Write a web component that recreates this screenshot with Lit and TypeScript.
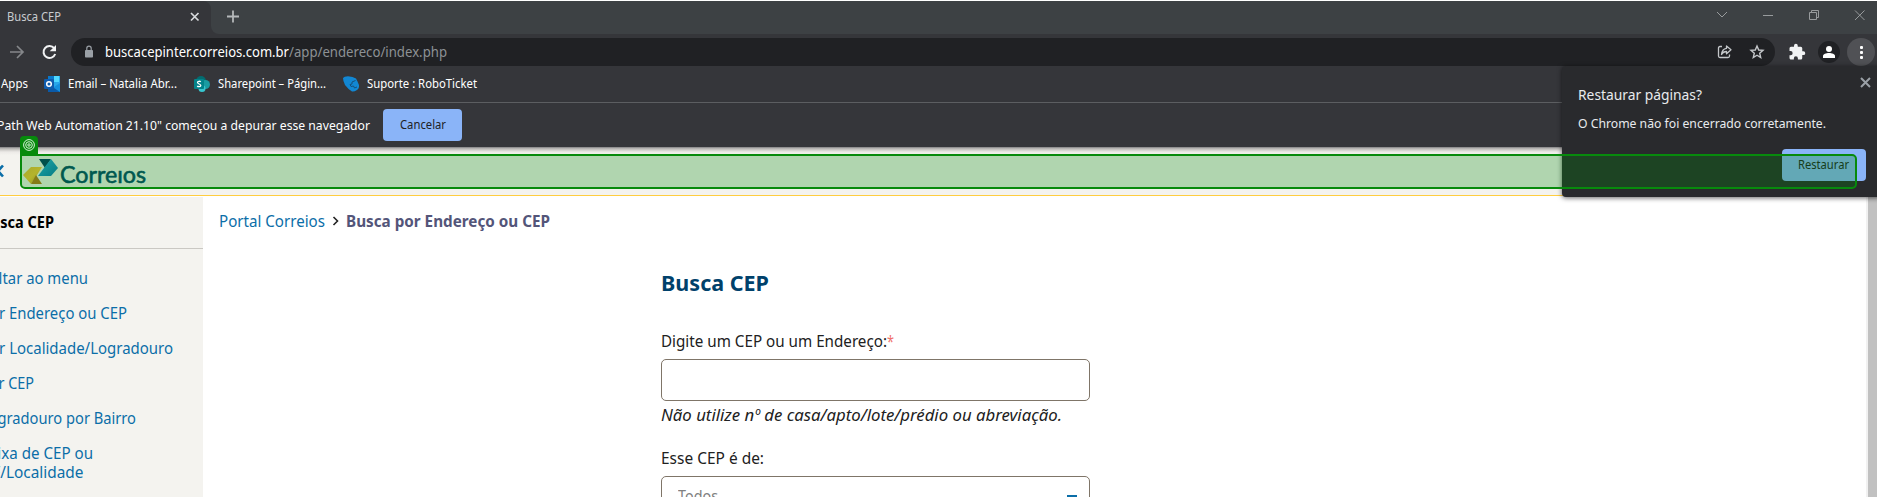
import { LitElement, html, css } from "lit";
import { customElement, property } from "lit/decorators.js";

/* A run of text that occupies an exact width, condensing its glyphs to fit. */
@customElement("fit-text")
class FitText extends LitElement {
  @property({ type: Number }) w = 0;
  static styles = css`
    :host { display: block; white-space: nowrap; flex: none; }
    .run { display: inline-block; transform-origin: 0 50%; white-space: nowrap; }
  `;
  firstUpdated() {
    const run = this.renderRoot.querySelector(".run") as HTMLElement;
    const fit = () => {
      run.style.transform = "none";
      const n = run.getBoundingClientRect().width;
      if (n) run.style.transform = `scaleX(${this.w / n})`;
    };
    fit();
    document.fonts?.ready.then(fit);
  }
  render() {
    return html`<div style="width:${this.w}px"><span class="run"><slot></slot></span></div>`;
  }
}

const menu = [
  { lines: [["Voltar ao menu", 107]] },
  { lines: [["Por Endereço ou CEP", 146]] },
  { lines: [["Por Localidade/Logradouro", 192]] },
  { lines: [["Por CEP", 53]] },
  { lines: [["Logradouro por Bairro", 155]] },
  { lines: [["Faixa de CEP ou", 112], ["UF/Localidade", 102.5]] },
];

@customElement("app-root")
class AppRoot extends LitElement {
  static styles = css`
    :host { display: block; width: 1877px; height: 497px; position: relative; overflow: hidden; background: #fff;
      font-family: "Noto Sans", "Open Sans", sans-serif; }
    * { box-sizing: border-box; }
    svg { display: block; flex: none; }
    .wrap { display: flex; flex-direction: column; height: 497px; }
    .tabs { margin-top: 1px; height: 33px; flex: none; background: #3d4144; display: flex; }
    .tab { width: 211px; background: #35363a; border-radius: 0 8px 0 0; display: flex; align-items: center; padding: 0 9px 2px 7px;
      justify-content: space-between; color: #c9ccd0; font-size: 12px; }
    .tab fit-text { line-height: 15px; margin-bottom: 1px; }
    .rest { flex: 1; background: #35363a; }
    .rest-in { height: 33px; background: #3d4144; border-radius: 0 0 0 8px; display: flex; align-items: center; padding: 0 4px 5px 14px; justify-content: space-between; }
    .bar { background: #35363a; display: flex; align-items: center; padding: 4px 0 0 9px; height: 32px; flex: none; }
    .bar > .reload { margin-left: 17px; }
    .omni { margin-left: 14px; width: 1704px; height: 28px; border-radius: 14px; background: #202124; display: flex; align-items: center;
      padding: 0 10px 0 12px; color: #9aa0a6; font-size: 13.5px; }
    .omni .host { color: #fff; margin-left: 10px; }
    .omni .path { color: #8d9195; }
    .omni .sp { flex: 1; }
    .omni .star { margin-left: 16px; }
    .ext { margin-left: 13px; }
    .person { margin-left: 12px; }
    .dots { margin-left: 7px; }
    .marks { height: 36px; flex: none; background: #35363a; color: #fff; font-size: 12px; display: flex; align-items: center; padding: 0 0 1px 1px; }
    .marks .i1 { margin-left: 16px; } .marks .t1 { margin-left: 8px; }
    .marks .i2 { margin-left: 17px; } .marks .t2 { margin-left: 8px; }
    .marks .i3 { margin-left: 17px; } .marks .t3 { margin-left: 8px; }
    .info { height: 45px; flex: none; background: #35363a; border-top: 1px solid #5c5e61; display: flex; align-items: center; color: #fff; font-size: 12.5px; }
    .info .msg { margin-left: -20px; }
    .cancel { margin-left: 13px; width: 79px; height: 32px; border-radius: 4px; background: #8ab4f8; color: #202124; font-size: 12px;
      display: flex; align-items: center; justify-content: center; padding-bottom: 1px; }
    .head { height: 49px; flex: none; background: linear-gradient(#77777a 0, #aaa9a8 1px, #d0cecb 3px, #eceae7 5px, #f4f3ef 8px); border-bottom: 1px solid #ffcd40; display: flex; align-items: center; }
    .page { margin-top: 1px; flex: 1; display: flex; min-height: 0; font-size: 16px; }
    .side { width: 203px; flex: none; background: #f4f3ef; color: #0b6ea8; overflow: hidden; }
    .side .ttl { height: 52px; border-bottom: 1px solid #cac8c3; font-weight: 700; color: #000; display: flex; align-items: center; padding-bottom: 1px; }
    .side fit-text { margin-left: -19px; line-height: 19px; }
    .side ul { list-style: none; margin: 20px 0 0; padding: 0; display: flex; flex-direction: column; gap: 16px; }
    .main { flex: 1; padding: 14px 0 0 16px; }
    .crumb { display: flex; align-items: center; height: 20px; line-height: 20px; color: #0b6ea8; }
    .crumb svg { margin: 0 7px; }
    .crumb .here { font-weight: 700; color: #535579; }
    .form { width: 429px; margin-left: 442px; margin-top: 36px; color: #212121; }
    h1 { margin: 0; font-size: 22px; line-height: 30px; font-weight: 700; color: #00416b; }
    .lbl { display: flex; line-height: 20px; margin-top: 34px; }
    .req { color: #f0716c; }
    .inp { height: 42px; border: 1px solid #7f7568; border-radius: 5px; margin-top: 8px; }
    .help { font-style: italic; line-height: 20px; margin-top: 4px; }
    .l2 { margin-top: 23px; }
    .sel { color: #808080; margin-top: 8px; padding: 8px 12px 0 16px; display: flex; justify-content: space-between; line-height: 22px; height: 43px; }
    .sb { width: 11px; background: #c1c1c1; border-left: 2px solid #f1f1f1; }
    .pop { position: absolute; left: 1562px; top: 66px; width: 320px; height: 131px; background: #292a2d; border-radius: 4px;
      box-shadow: 0 1px 5px rgba(0,0,0,.6); color: #e8eaed; display: flex; flex-direction: column; padding: 11px 16px 0 16px; }
    .pop .row { display: flex; justify-content: space-between; height: 36px; }
    .pop .row svg { margin-right: -5px; }
    .pop .t { font-size: 15px; line-height: 35px; }
    .pop .b { font-size: 12.5px; line-height: 21px; }
    .pop .btn { margin: 15px 0 0; align-self: flex-end; width: 84px; height: 32px; border-radius: 4px; background: #8ab4f8; color: #202124; font-size: 12px;
      display: flex; align-items: center; justify-content: center; padding-right: 2px; padding-bottom: 1px; }
    .hl { position: absolute; left: 20px; top: 154px; width: 1837px; height: 35px; border: 2px solid #078a0c; border-radius: 0 5px 5px 5px; background: rgba(0,138,12,.28); }
    .tag { position: absolute; left: 20px; top: 136px; width: 18px; height: 19px; background: #078a0c; border-radius: 4px 4px 0 0; padding: 3px; }
    .logo { position: relative; z-index: 1; display: flex; align-items: center; margin-left: 19px; }
    .brand { font-family: "Lato", sans-serif; font-weight: 400; -webkit-text-stroke: .6px #00584f; color: #00584f; font-size: 23px; line-height: 24px; margin: 6px 0 0 1px; }
  `;

  render() {
    return html`
    <div class="wrap">
      <div class="tabs">
        <div class="tab"><fit-text w="54">Busca CEP</fit-text>
          <svg width="14" height="14" viewBox="0 0 14 14" stroke="#d8dadd" stroke-width="1.7"><path d="M3 3l7.500 7.500M10.500 3L3 10.500" /></svg></div>
        <div class="rest"><div class="rest-in">
          <svg width="16" height="20" viewBox="0 0 16 20" stroke="#b4b7b9" stroke-width="1.800"><path d="M8 5.500v12M2 11.500h12" /></svg>
          <svg width="160" height="16" viewBox="0 0 160 16" fill="none" stroke="#989b9d" stroke-width="1">
            <path d="M4 5l5 5 5-5M50 8.500h10M96.500 5.500h7v7h-7zM98.500 5.500v-2h7v7h-2M142 3.500l9.500 9.500M151.500 3.500l-9.500 9.500" /></svg>
        </div></div>
      </div>
      <div class="bar">
        <svg width="16" height="16" viewBox="0 0 16 16" fill="none" stroke="#85878a" stroke-width="1.700"><path d="M1 8h13M8 2l6 6-6 6" /></svg>
        <svg class="reload" width="15" height="16" viewBox="0 0 15 16" fill="none" stroke="#f1f3f4" stroke-width="2"><path d="M12.200 4.200A6 6 0 1 0 13.200 10" /><path d="M14 1v6.300H7.700z" fill="#f1f3f4" stroke="none" /></svg>
        <div class="omni">
          <svg width="12" height="14" viewBox="0 0 12 14"><rect x="2" y="5" width="8" height="7.500" rx=".8" fill="#9aa0a6" /><path d="M3.800 5V3.300a2.200 2.200 0 0 1 4.400 0V5" fill="none" stroke="#9aa0a6" stroke-width="1.200" /></svg>
          <fit-text class="host" w="184">buscacepinter.correios.com.br</fit-text><fit-text class="path" w="158">/app/endereco/index.php</fit-text>
          <span class="sp"></span>
          <svg width="16" height="16" viewBox="0 0 16 16" fill="none" stroke="#c4c7ca" stroke-width="1.300"><path d="M5 2.500H3Q1.500 2.500 1.500 4v8Q1.500 13.500 3 13.500h8q1.500 0 1.500-1.500v-1.500" /><path d="M9.500 2l4.500 3.700-4.500 4V7.500Q6 7.500 4.500 10.500 5 5 9.500 4.300z" stroke-linejoin="round" /></svg>
          <svg class="star" width="16" height="16" viewBox="0 0 16 16" fill="none" stroke="#c4c7ca" stroke-width="1.400"><path d="M8 2l1.700 4 4.300.4-3.300 2.800 1 4.300L8 11.200l-3.700 2.300 1-4.300L2 6.400 6.300 6z" /></svg>
        </div>
        <svg class="ext" width="18" height="18" viewBox="0 0 24 24" fill="#f1f3f4"><path d="M20.500 11H19V7a2 2 0 0 0-2-2h-4V3.500a2.500 2.500 0 0 0-5 0V5H4a2 2 0 0 0-2 2v3.800h1.500a2.700 2.700 0 0 1 0 5.400H2V20c0 1.100.9 2 2 2h3.800v-1.500a2.700 2.700 0 0 1 5.400 0V22H17a2 2 0 0 0 2-2v-4h1.500a2.500 2.500 0 0 0 0-5z" /></svg>
        <svg class="person" width="22" height="22" viewBox="0 0 22 22"><circle cx="11" cy="11" r="11" fill="#202124" /><circle cx="11" cy="8" r="3" fill="#fff" /><path d="M5 17v-2c0-2 3-3 6-3s6 1 6 3v2z" fill="#fff" /></svg>
        <svg class="dots" width="28" height="28" viewBox="0 0 28 28"><circle cx="14" cy="14" r="14" fill="#505155" /><g fill="#fff"><rect x="13" y="8" width="3" height="3" rx="1" /><rect x="13" y="13" width="3" height="3" rx="1" /><rect x="13" y="18" width="3" height="3" rx="1" /></g></svg>
      </div>
      <div class="marks">
        <fit-text w="27">Apps</fit-text>
        <svg class="i1" width="16" height="16" viewBox="0 0 16 16"><path d="M4 0h12v14H4z" fill="#28a8ea" /><path d="M10 0h5v6h-5z" fill="#50d9ff" /><path d="M4 0h6v6H4z" fill="#0a78c9" /><path d="M4 8l6 3 6-4v9H4z" fill="#1490df" /><path d="M4 8l12 8H4z" fill="#0a5aa8" /><rect y="3" width="10" height="10" rx="1" fill="#0f5cad" /><circle cx="5" cy="8" r="2.300" fill="none" stroke="#fff" stroke-width="1.500" /></svg>
        <fit-text class="t1" w="109">Email – Natalia Abr...</fit-text>
        <svg class="i2" width="16" height="16" viewBox="0 0 16 16"><circle cx="7" cy="5" r="5" fill="#036c70" /><circle cx="11.500" cy="8.500" r="4.500" fill="#1a9ba1" /><circle cx="8" cy="12.500" r="3.500" fill="#37c6d0" /><rect y="3" width="10" height="10" rx="1" fill="#03838a" /><path d="M6.800 5.800C6 5 3.500 5 3.500 6.500S6.800 8 6.800 9.500 4 11 3.200 10" fill="none" stroke="#fff" stroke-width="1.300" /></svg>
        <fit-text class="t2" w="108">Sharepoint – Págin...</fit-text>
        <svg class="i3" width="16" height="16" viewBox="0 0 16 16"><path d="M0 2Q1 .5 5 .3q5 .2 8 2.200l1.500 3L16 9q.5 3-2 5Q11 16 9 15.500 5 13 2 9 0 5 0 2z" fill="#1287d3" /><path d="M12.500 4.500L9 6v2L7 8.500l1 2 2.500-.5 1 2 2.500-1" fill="none" stroke="#14517c" stroke-width="1" /></svg>
        <fit-text class="t3" w="110">Suporte : RoboTicket</fit-text>
      </div>
      <div class="info"><fit-text class="msg" w="390">"UiPath Web Automation 21.10" começou a depurar esse navegador</fit-text>
        <div class="cancel"><fit-text w="46">Cancelar</fit-text></div></div>
      <div class="head">
        <svg width="4" height="14" viewBox="0 0 4 14" fill="none" stroke="#0b6ea8" stroke-width="2.600"><path d="M3 1.500L-2 7l5 5.500" /></svg>
        <div class="logo">
        <svg width="36" height="27" viewBox="0 0 36 27">
          <defs><linearGradient id="y" x2="1" y2="1"><stop stop-color="#a9a82a" /><stop offset=".5" stop-color="#b4b42c" /><stop offset="1" stop-color="#8f8f1e" /></linearGradient>
          <linearGradient id="b" x2="1" y2="1"><stop stop-color="#1fa5a8" /><stop offset="1" stop-color="#067c84" /></linearGradient></defs>
          <path d="M16 1h12l-6 9z" fill="#00504b" /><path d="M28 1l7 9-7 8H15l6-8z" fill="url(#b)" />
          <path d="M0 17l8-8h11l-5 8-6 9z" fill="url(#y)" /><path d="M13 17l6 9H8z" fill="#857b18" /></svg>
        <fit-text class="brand" w="86">Correıos</fit-text></div>
      </div>
      <div class="page">
        <div class="side">
          <div class="ttl"><fit-text w="73">Busca CEP</fit-text></div>
          <ul>${menu.map((m) => html`<li>${m.lines.map(([t, w]) => html`<fit-text w=${w}>${t}</fit-text>`)}</li>`)}</ul>
        </div>
        <div class="main">
          <div class="crumb"><fit-text w="106">Portal Correios</fit-text>
            <svg width="7" height="10" viewBox="0 0 7 10" fill="none" stroke="#222" stroke-width="1.600"><path d="M1.500 1l4 4-4 4" /></svg>
            <fit-text class="here" w="204">Busca por Endereço ou CEP</fit-text></div>
          <div class="form">
            <h1><fit-text w="108">Busca CEP</fit-text></h1>
            <div class="lbl"><fit-text w="226">Digite um CEP ou um Endereço:</fit-text><fit-text class="req" w="7">*</fit-text></div>
            <div class="inp"></div>
            <div class="help"><fit-text w="401">Não utilize nº de casa/apto/lote/prédio ou abreviação.</fit-text></div>
            <div class="lbl l2"><fit-text w="103">Esse CEP é de:</fit-text></div>
            <div class="inp sel"><fit-text w="40">Todos</fit-text><svg width="10" height="20" viewBox="0 0 10 20"><path d="M0 10h10v2H0z" fill="#0b6ea8" /></svg></div>
          </div>
        </div>
        <div class="sb"></div>
      </div>
    </div>
    <div class="pop">
      <div class="row"><fit-text class="t" w="124">Restaurar páginas?</fit-text>
        <svg width="11" height="11" viewBox="0 0 11 11" stroke="#9aa0a6" stroke-width="2"><path d="M1 1l9 9M10 1l-9 9" /></svg></div>
      <fit-text class="b" w="248">O Chrome não foi encerrado corretamente.</fit-text>
      <div class="btn"><fit-text w="51">Restaurar</fit-text></div>
    </div>
    <div class="hl"></div>
    <div class="tag"><svg width="12" height="12" viewBox="0 0 12 12" fill="none" stroke="#d9f0da" stroke-width="1"><circle cx="6" cy="6" r="5.400" /><circle cx="6" cy="6" r="3.300" /><circle cx="6" cy="6" r="1.200" /></svg></div>`;
  }
}
